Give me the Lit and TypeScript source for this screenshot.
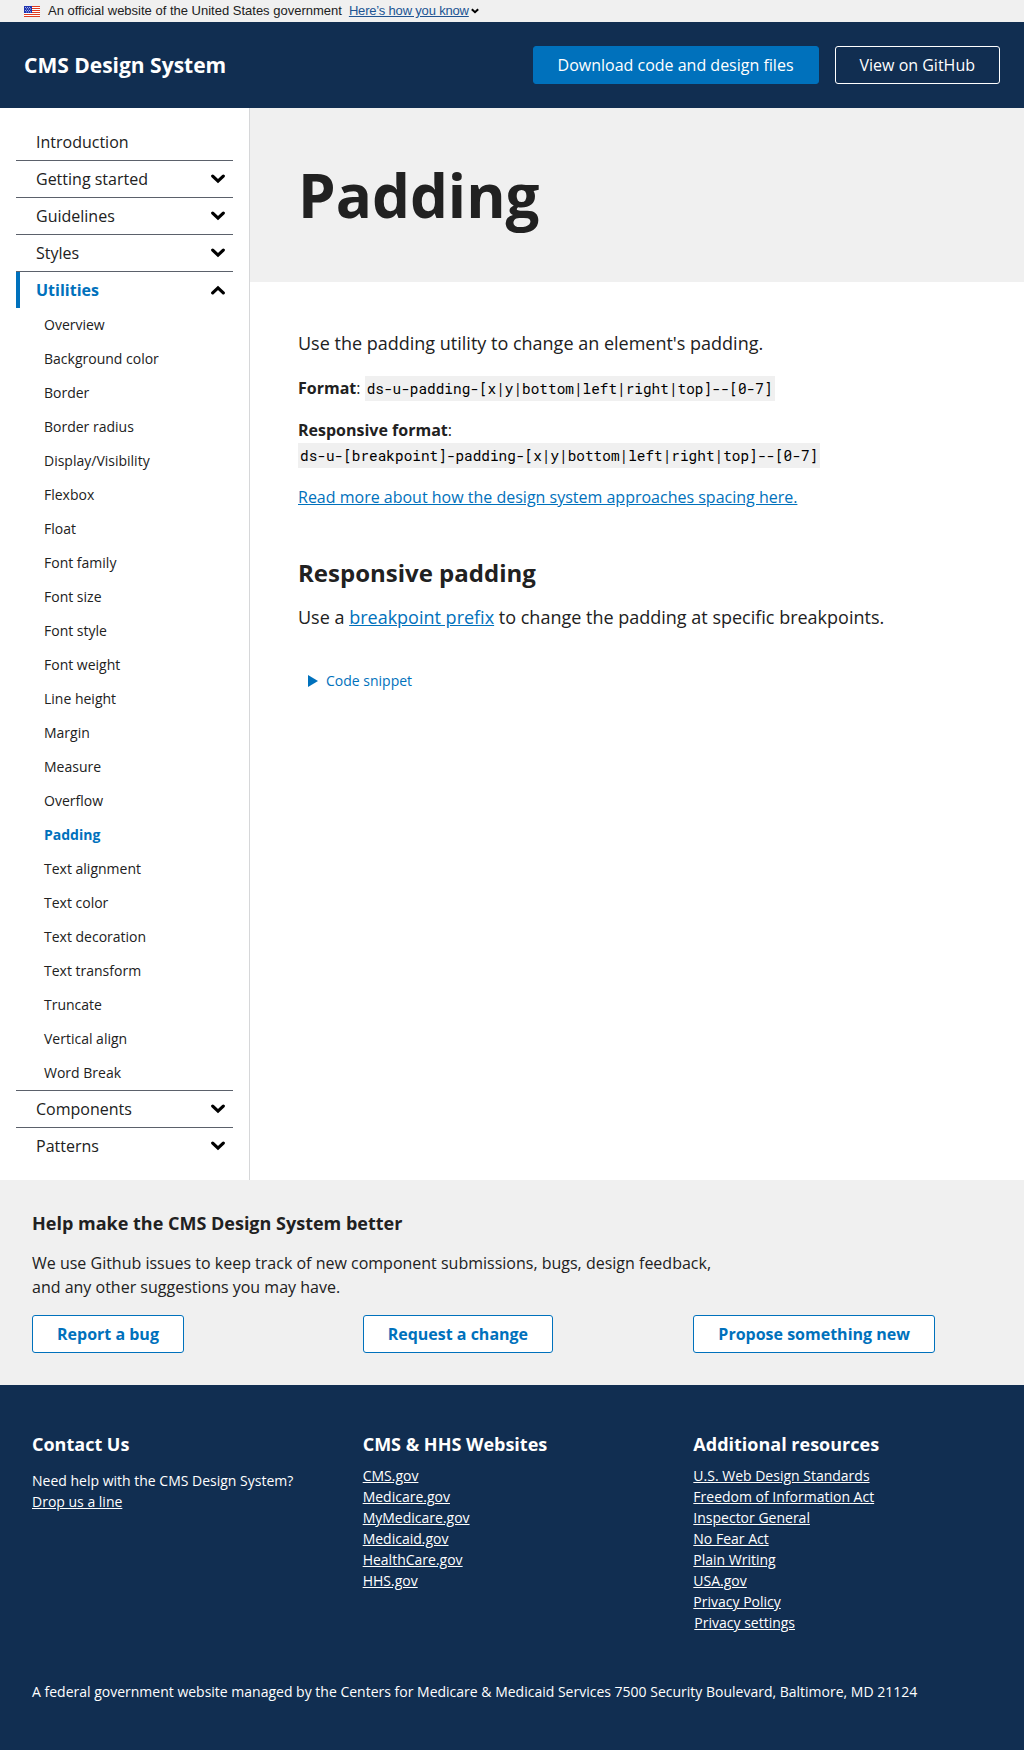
import { LitElement, html, css, svg, nothing } from "lit";
import { customElement, property } from "lit/decorators.js";
import { classMap } from "lit/directives/class-map.js";

const UTILITIES = [
  "Overview", "Background color", "Border", "Border radius", "Display/Visibility", "Flexbox", "Float",
  "Font family", "Font size", "Font style", "Font weight", "Line height", "Margin", "Measure", "Overflow",
  "Padding", "Text alignment", "Text color", "Text decoration", "Text transform", "Truncate",
  "Vertical align", "Word Break",
];

interface NavEntry {
  label: string;
  children?: string[];
  collapsible?: boolean;
}

const NAV: NavEntry[] = [
  { label: "Introduction" },
  { label: "Getting started", collapsible: true },
  { label: "Guidelines", collapsible: true },
  { label: "Styles", collapsible: true },
  { label: "Utilities", collapsible: true, children: UTILITIES },
  { label: "Components", collapsible: true },
  { label: "Patterns", collapsible: true },
];

@customElement("usa-banner")
export class UsaBanner extends LitElement {
  static styles = css`
    :host {
      display: flex;
      align-items: center;
      height: 22px;
      padding-left: 24px;
      background: #f0f0f0;
      color: #212121;
      font: 13px/18px "Liberation Sans", Arial, sans-serif;
    }
    .flag { width: 16px; height: 11px; margin: 1px 8px 0 0; }
    .how { margin-left: 7px; color: #205493; text-decoration: underline; letter-spacing: -0.18px; }
    .chevron { width: 8px; height: 6px; margin-left: 2px; }
  `;

  render() {
    const stars = [
      [1.5, 1], [3.5, 1], [5.5, 1], [2.5, 2.5], [4.5, 2.5], [6.5, 2.5],
      [1.5, 4], [3.5, 4], [5.5, 4], [2.5, 5.5], [4.5, 5.5], [6.5, 5.5],
    ];
    return html`
      <svg class="flag" viewBox="0 0 16 11">
        <rect width="16" height="11" fill="#fff" />
        ${[0, 2, 4, 6, 8, 10].map((y) => svg`<rect y=${y} width="16" height="1" fill="#e03b20" />`)}
        <rect width="8" height="7" fill="#1e33b1" />
        ${stars.map(([x, y]) => svg`<rect x=${x - 0.4} y=${y} width=".8" height=".8" fill="#fff" />`)}
      </svg>
      <span>An official website of the United States government</span>
      <a class="how">Here’s how you know</a>
      <svg class="chevron" viewBox="0 0 8 6" fill="none" stroke="#000" stroke-width="2">
        <path d="M.8 1.2 4 4.2 7.2 1.2" />
      </svg>
    `;
  }
}

@customElement("site-header")
export class SiteHeader extends LitElement {
  static styles = css`
    :host {
      display: flex;
      align-items: center;
      gap: 16px;
      height: 86px;
      padding: 0 24px;
      box-sizing: border-box;
      background: #112e51;
      color: #fff;
    }
    .title { flex: 1; font-size: 21px; font-weight: 700; line-height: 26px; }
    .button {
      height: 38px;
      padding: 0 24px;
      border: 1px solid #fff;
      border-radius: 3px;
      box-sizing: border-box;
      font-size: 16px;
      line-height: 36px;
    }
    .primary { border-color: #0071bc; background: #0071bc; }
  `;

  render() {
    return html`
      <span class="title">CMS Design System</span>
      <a class="button primary">Download code and design files</a>
      <a class="button">View on GitHub</a>
    `;
  }
}

@customElement("side-nav")
export class SideNav extends LitElement {
  @property() current = "Padding";

  static styles = css`
    :host {
      display: block;
      width: 250px;
      padding: 16px;
      border-right: 1px solid #d6d7d9;
      box-sizing: border-box;
      color: #212121;
    }
    .entry + .entry { border-top: 1px solid #5b616b; }
    .head {
      display: flex;
      align-items: center;
      justify-content: space-between;
      height: 36px;
      padding: 0 8px 0 20px;
      font-size: 16px;
    }
    .head.open {
      padding-left: 16px;
      border-left: 4px solid #0071bc;
      color: #0071bc;
      font-weight: 700;
    }
    .chevron { width: 14px; height: 10px; }
    .chevron.up { transform: rotate(180deg); }
    .child { display: block; padding-left: 28px; font-size: 14px; line-height: 34px; }
    .child.current { color: #0071bc; font-weight: 700; }
  `;

  render() {
    return NAV.map((entry) => html`
      <div class="entry">
        <div class=${classMap({ head: true, open: !!entry.children })}>
          <span>${entry.label}</span>
          ${entry.collapsible
            ? html`<svg class=${classMap({ chevron: true, up: !!entry.children })} viewBox="0 0 14 10"
                fill="none" stroke="#000" stroke-width="3.2" stroke-linecap="round">
                <path d="M1.7 2.1 7 7.1 12.3 2.1" />
              </svg>`
            : nothing}
        </div>
        ${entry.children?.map((name) => html`
          <a class=${classMap({ child: true, current: name === this.current })}>${name}</a>
        `)}
      </div>
    `);
  }
}

@customElement("page-content")
export class PageContent extends LitElement {
  static styles = css`
    :host { display: block; flex: 1; color: #212121; }
    .hero { display: flex; height: 174px; padding-left: 48px; background: #f0f0f0; }
    .hero h1 { margin: 48px 0 0; font-size: 60px; line-height: 78px; }
    .body { padding: 48px 48px 0; font-size: 16px; line-height: 25px; }
    p { margin: 0 0 17px; }
    .lead { font-size: 18px; line-height: 27px; margin-bottom: 19px; }
    code {
      display: inline-block;
      padding: 3px 2px;
      background: #f0f0f0;
      color: #000;
      font: 14.4px/19px "Roboto Mono", "Liberation Mono", monospace;
      vertical-align: top;
    }
    a { color: #0071bc; text-decoration: underline; }
    h2 { margin: 47px 0 16px; font-size: 24px; line-height: 31px; }
    .snippet {
      display: flex;
      align-items: center;
      gap: 8px;
      margin: 39px 0 0 10px;
      color: #0071bc;
      font-size: 14px;
      line-height: 21px;
    }
    .triangle { width: 10px; height: 12px; }
  `;

  render() {
    return html`
      <div class="hero"><h1>Padding</h1></div>
      <div class="body">
        <p class="lead">Use the padding utility to change an element's padding.</p>
        <p><b>Format</b>: <code>ds-u-padding-[x|y|bottom|left|right|top]--[0-7]</code></p>
        <p><b>Responsive format</b>:<br /><code>ds-u-[breakpoint]-padding-[x|y|bottom|left|right|top]--[0-7]</code></p>
        <p><a>Read more about how the design system approaches spacing here.</a></p>
        <h2>Responsive padding</h2>
        <p class="lead">Use a <a>breakpoint prefix</a> to change the padding at specific breakpoints.</p>
        <div class="snippet">
          <svg class="triangle" viewBox="0 0 10 12" fill="#0071bc"><path d="M0 0 10 6 0 12z" /></svg>
          <span>Code snippet</span>
        </div>
      </div>
    `;
  }
}

@customElement("feedback-panel")
export class FeedbackPanel extends LitElement {
  static styles = css`
    :host {
      display: block;
      height: 205px;
      padding: 30px 0 0 32px;
      box-sizing: border-box;
      background: #f0f0f0;
      color: #212121;
    }
    h3 { margin: 0 0 14px; font-size: 18px; line-height: 27px; }
    p { width: 690px; margin: 0 0 16px; font-size: 16px; line-height: 24px; }
    .actions { display: grid; grid-template-columns: repeat(3, 1fr); justify-items: start; }
    .button {
      height: 38px;
      padding: 0 24px;
      border: 1px solid #0071bc;
      border-radius: 3px;
      box-sizing: border-box;
      background: #fff;
      color: #0071bc;
      font-size: 16px;
      font-weight: 700;
      line-height: 36px;
    }
  `;

  render() {
    return html`
      <h3>Help make the CMS Design System better</h3>
      <p>We use Github issues to keep track of new component submissions, bugs, design feedback, and any other suggestions you may have.</p>
      <div class="actions">
        ${["Report a bug", "Request a change", "Propose something new"].map((t) => html`<a class="button">${t}</a>`)}
      </div>
    `;
  }
}

@customElement("site-footer")
export class SiteFooter extends LitElement {
  static styles = css`
    :host {
      display: block;
      height: 365px;
      padding: 46px 0 0 32px;
      box-sizing: border-box;
      background: #112e51;
      color: #fff;
      font-size: 14px;
      line-height: 21px;
    }
    .columns { display: grid; grid-template-columns: repeat(3, 1fr); height: 250px; }
    h3 { margin: 0 0 7px; font-size: 18px; line-height: 27px; }
    .help { padding-top: 5px; }
    .link { text-decoration: underline; }
    .settings { margin-left: 1px; }
    .address { margin: 0; }
  `;

  private links(names: string[]) {
    return names.map((n) => html`
      <div><a class=${classMap({ link: true, settings: n === "Privacy settings" })}>${n}</a></div>
    `);
  }

  render() {
    return html`
      <div class="columns">
        <div>
          <h3>Contact Us</h3>
          <div class="help">Need help with the CMS Design System?<br /><a class="link">Drop us a line</a></div>
        </div>
        <div>
          <h3>CMS &amp; HHS Websites</h3>
          ${this.links(["CMS.gov", "Medicare.gov", "MyMedicare.gov", "Medicaid.gov", "HealthCare.gov", "HHS.gov"])}
        </div>
        <div>
          <h3>Additional resources</h3>
          ${this.links([
            "U.S. Web Design Standards", "Freedom of Information Act", "Inspector General", "No Fear Act",
            "Plain Writing", "USA.gov", "Privacy Policy", "Privacy settings",
          ])}
        </div>
      </div>
      <p class="address">A federal government website managed by the Centers for Medicare &amp; Medicaid Services 7500 Security Boulevard, Baltimore, MD 21124</p>
    `;
  }
}

@customElement("app-root")
export class AppRoot extends LitElement {
  static styles = css`
    :host {
      display: block;
      width: 100%;
      background: #fff;
      font-family: "Open Sans", "Noto Sans", sans-serif;
    }
    .main { display: flex; }
  `;

  render() {
    return html`
      <usa-banner></usa-banner>
      <site-header></site-header>
      <div class="main">
        <side-nav></side-nav>
        <page-content></page-content>
      </div>
      <feedback-panel></feedback-panel>
      <site-footer></site-footer>
    `;
  }
}
